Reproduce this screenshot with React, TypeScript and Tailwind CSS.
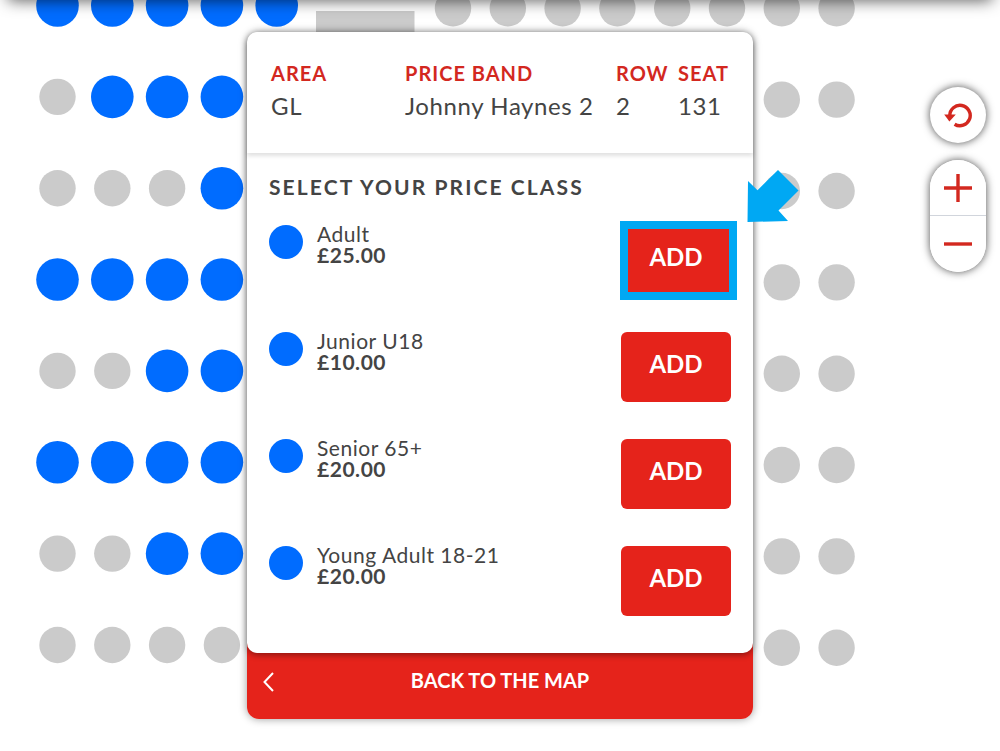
import { ReactNode } from 'react'

interface PriceClass {
  name: string
  price: string
  highlighted?: boolean
}

const seatInfo = [
  { label: 'AREA', value: 'GL', width: 'w-[134px]' },
  { label: 'PRICE BAND', value: 'Johnny Haynes 2', width: 'w-[211px]' },
  { label: 'ROW', value: '2', width: 'w-[62px]' },
  { label: 'SEAT', value: '131', width: 'w-[51px]' },
]

const priceClasses: PriceClass[] = [
  { name: 'Adult', price: '£25.00', highlighted: true },
  { name: 'Junior U18', price: '£10.00' },
  { name: 'Senior 65+', price: '£20.00' },
  { name: 'Young Adult 18-21', price: '£20.00' },
]

// 1 = available, 0 = taken
const leftRows = ['11111', '0111', '0001', '1111', '0011', '1111', '0011', '0000']
const rightRows = ['00000000', '00', '00', '00', '00', '00', '00', '00']

function SeatMap() {
  return (
    <svg className="absolute left-0 top-0" width="1000" height="751" viewBox="0 0 1000 751" aria-hidden="true">
      {leftRows.map((row, r) =>
        row.split('').map((seat, c) => (
          <circle
            key={`l-${r}-${c}`}
            cx={57.5 + c * 54.8}
            cy={5.5 + r * 91.35}
            r={seat === '1' ? 21.3 : 18.2}
            fill={seat === '1' ? '#006cff' : '#cbcbcb'}
          />
        ))
      )}
      <rect x="316" y="11" width="98.5" height="40" fill="#cbcbcb" />
      {rightRows.map((row, r) =>
        row.split('').map((_, c) => (
          <circle
            key={`r-${r}-${c}`}
            cx={836.6 - (row.length - 1 - c) * 54.8}
            cy={8.3 + r * 91.35}
            r={18.2}
            fill="#cbcbcb"
          />
        ))
      )}
    </svg>
  )
}

function MapButton({ label, className, children }: { label: string; className: string; children: ReactNode }) {
  return (
    <button aria-label={label} className={`flex w-14 h-14 items-center justify-center bg-white ${className}`}>
      {children}
    </button>
  )
}

function MapControls() {
  return (
    <div className="absolute right-3.5 top-[87px] flex flex-col gap-[17px]">
      <MapButton label="Reset map" className="rounded-full shadow-[0_0_8px_rgba(0,0,0,0.7)]">
        <svg width="28" height="28" viewBox="0 0 28 28" fill="none">
          <path d="M5.8 14.6A10.2 10.2 0 1 1 10.6 23.2" stroke="#d3281f" strokeWidth="3.4" />
          <path d="M0.2 13.4H11.8L5.4 20.4Z" fill="#d3281f" />
        </svg>
      </MapButton>
      <div className="rounded-full shadow-[0_0_8px_rgba(0,0,0,0.7)]">
        <MapButton label="Zoom in" className="rounded-t-full border-b border-gray-300">
          <svg width="28" height="28" viewBox="0 0 28 28">
            <path d="M0 14H28M14 0V28" stroke="#d3281f" strokeWidth="3.4" />
          </svg>
        </MapButton>
        <MapButton label="Zoom out" className="rounded-b-full">
          <svg width="28" height="28" viewBox="0 0 28 28">
            <path d="M0 14H28" stroke="#d3281f" strokeWidth="3.4" />
          </svg>
        </MapButton>
      </div>
    </div>
  )
}

function Highlight() {
  return (
    <>
      <div className="pointer-events-none absolute -left-px -top-1 w-[117px] h-[79px] border-8 border-[#00a8f3]" />
      <svg className="pointer-events-none absolute left-[126px] -top-[55px]" width="52" height="52" viewBox="0 0 52 52">
        <path d="M1 11L10.5 20.2L31 0L51.5 20.5L31.5 40.5L41 51L0.5 52Z" fill="#00a8f3" />
      </svg>
    </>
  )
}

function PriceRow({ item }: { item: PriceClass }) {
  return (
    <li className="flex items-start">
      <span className="w-[34px] h-[34px] shrink-0 rounded-full bg-[#006cff]" />
      <div className="ml-3.5 -mt-0.5 flex-1 text-[21px] leading-[21px] tracking-wide">
        <p>{item.name}</p>
        <p className="font-bold">{item.price}</p>
      </div>
      <div className="relative">
        <button
          aria-label={`Add ${item.name}`}
          className="w-[110px] h-[70px] pb-1.5 rounded-md bg-[#e5231b] text-2xl font-bold text-white"
        >
          ADD
        </button>
        {item.highlighted && <Highlight />}
      </div>
    </li>
  )
}

export default function App() {
  return (
    <main className="relative min-h-screen overflow-hidden bg-white font-['Lato',sans-serif] text-[#444444]">
      <SeatMap />
      <div className="absolute inset-x-2 -top-4 h-4 shadow-[0_0_16px_rgba(0,0,0,0.7)]" />
      <MapControls />

      <section className="relative mx-auto mt-8 w-full max-w-[506px] rounded-xl shadow-[0_0_9px_rgba(0,0,0,0.4)]">
        <div className="relative z-10 rounded-[10px] bg-white shadow-[0_2px_6px_rgba(0,0,0,0.4)]">
          <header className="h-[121px] px-6 pt-[26px] rounded-t-[10px] shadow-[0_3px_4px_rgba(0,0,0,0.12)]">
            <table className="table-fixed text-left whitespace-nowrap">
              <thead>
                <tr className="h-[30px] text-xl leading-[30px] tracking-wider text-[#d3281f]">
                  {seatInfo.map(info => (
                    <th key={info.label} className={`p-0 font-bold ${info.width}`}>
                      {info.label}
                    </th>
                  ))}
                </tr>
              </thead>
              <tbody>
                <tr className="text-2xl leading-9 tracking-wide">
                  {seatInfo.map(info => (
                    <td key={info.label} className="p-0">
                      {info.value}
                    </td>
                  ))}
                </tr>
              </tbody>
            </table>
          </header>

          <div className="px-[22px] pt-5 pb-[37px]">
            <h2 className="mb-6 text-[21px] leading-7 font-bold tracking-widest">SELECT YOUR PRICE CLASS</h2>
            <ul className="flex flex-col gap-[37px]">
              {priceClasses.map(item => (
                <PriceRow key={item.name} item={item} />
              ))}
            </ul>
          </div>
        </div>

        <button className="relative -mt-3 block w-full h-[78px] rounded-b-xl bg-[#e5231b] text-xl font-bold text-white">
          <svg className="absolute left-4 top-[31px]" width="11" height="20" viewBox="0 0 11 20" fill="none">
            <path d="M10 1L1.5 10L10 19" stroke="white" strokeWidth="2" />
          </svg>
          BACK TO THE MAP
        </button>
      </section>
    </main>
  )
}
